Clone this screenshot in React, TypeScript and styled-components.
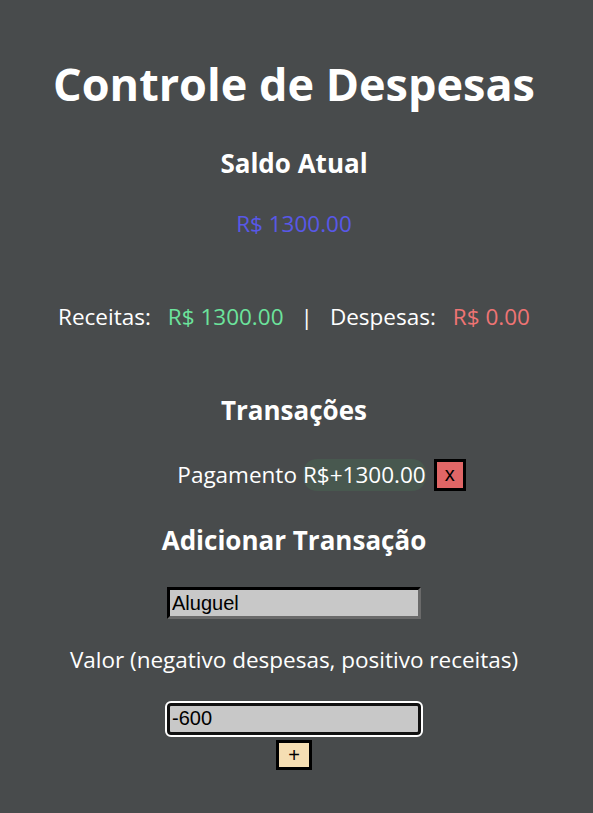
import React from 'react'
import styled, { createGlobalStyle } from 'styled-components'

const GlobalStyle = createGlobalStyle`
    html, body {
        margin: 0;
        padding: 0;
        background: #484b4c;
    }
    body {
        font-family: 'Open Sans', 'Noto Sans', sans-serif;
        color: #ffffff;
    }
`

const Page = styled.main`
    min-height: 813px;
    padding: 61px 5px 0 0;
    box-sizing: border-box;
    display: flex;
    flex-direction: column;
    align-items: center;
    text-align: center;
`

const Title = styled.h1`
    margin: 0;
    font-size: 45px;
    line-height: 1;
    font-weight: 700;
`

const Heading = styled.h2<{ gap: number }>`
    margin: ${({ gap }) => gap}px 0 0;
    font-size: 26px;
    line-height: 1;
    font-weight: 700;
`

const Balance = styled.div`
    margin-top: 37px;
    font-size: 22.5px;
    line-height: 1;
    color: #5858e8;
`

const Summary = styled.div`
    margin-top: 70px;
    display: flex;
    gap: 17px;
    font-size: 22.5px;
    line-height: 1;
`

const Amount = styled.span<{ tone: 'income' | 'expense' }>`
    color: ${({ tone }) => (tone === 'income' ? '#6ce39c' : '#ef7474')};
`

const TxList = styled.ul`
    margin: 36px 0 0;
    padding: 0 0 0 55px;
    list-style: none;
`

const TxRow = styled.li`
    display: flex;
    align-items: center;
    height: 32px;
    font-size: 22.5px;
`

const TxText = styled.span<{ pill?: boolean }>`
    padding: 4px 0;
    line-height: 1.1;
    margin-right: ${({ pill }) => (pill ? '8px' : '6px')};
    background: ${({ pill }) => (pill ? '#48584f' : 'transparent')};
    border-radius: 14px;
`

const RemoveButton = styled.button`
    width: 32px;
    height: 32px;
    box-sizing: border-box;
    border: 3px solid #000;
    background: #e06666;
    color: #000;
    font-family: 'Liberation Sans', Arial, sans-serif;
    font-size: 20px;
    line-height: 1;
    padding: 0 0 2px;
`

const Field = styled.input<{ focused?: boolean }>`
    width: 254px;
    height: 32px;
    box-sizing: border-box;
    background: #c8c8c8;
    color: #000;
    font-family: 'Liberation Sans', Arial, sans-serif;
    font-size: 20px;
    padding: 0 2px;
    border: 3px inset #6a6a6a;
    border-top-color: #232323;
    border-left-color: #232323;
    ${({ focused }) =>
        focused &&
        `
        border: 3px solid #111;
        border-radius: 4px;
        outline: 2px solid #ffffff;
    `}
`

const Label = styled.div`
    margin-top: 30px;
    font-size: 22.5px;
    line-height: 1;
`

const AddButton = styled.button`
    margin-top: 5px;
    width: 36px;
    height: 30px;
    box-sizing: border-box;
    border: 3px solid #000;
    background: #f5deb3;
    color: #000;
    font-family: 'Liberation Sans', Arial, sans-serif;
    font-size: 20px;
    line-height: 1;
    padding: 0;
`

export default function App() {
    return (
        <>
            <GlobalStyle />
            <Page>
                <Title>Controle de Despesas</Title>
                <Heading gap={44}>Saldo Atual</Heading>
                <Balance>R$ 1300.00</Balance>
                <Summary>
                    <span>Receitas:</span>
                    <Amount tone="income">R$ 1300.00</Amount>
                    <span>|</span>
                    <span>Despesas:</span>
                    <Amount tone="expense">R$ 0.00</Amount>
                </Summary>
                <Heading gap={69}>Transações</Heading>
                <TxList>
                    <TxRow>
                        <TxText>Pagamento</TxText>
                        <TxText pill>R$+1300.00</TxText>
                        <RemoveButton>x</RemoveButton>
                    </TxRow>
                </TxList>
                <Heading gap={36}>Adicionar Transação</Heading>
                <Field style={{ marginTop: 34 }} defaultValue="Aluguel" />
                <Label>Valor (negativo despesas, positivo receitas)</Label>
                <Field style={{ marginTop: 31 }} focused defaultValue="-600" />
                <AddButton>+</AddButton>
            </Page>
        </>
    )
}
